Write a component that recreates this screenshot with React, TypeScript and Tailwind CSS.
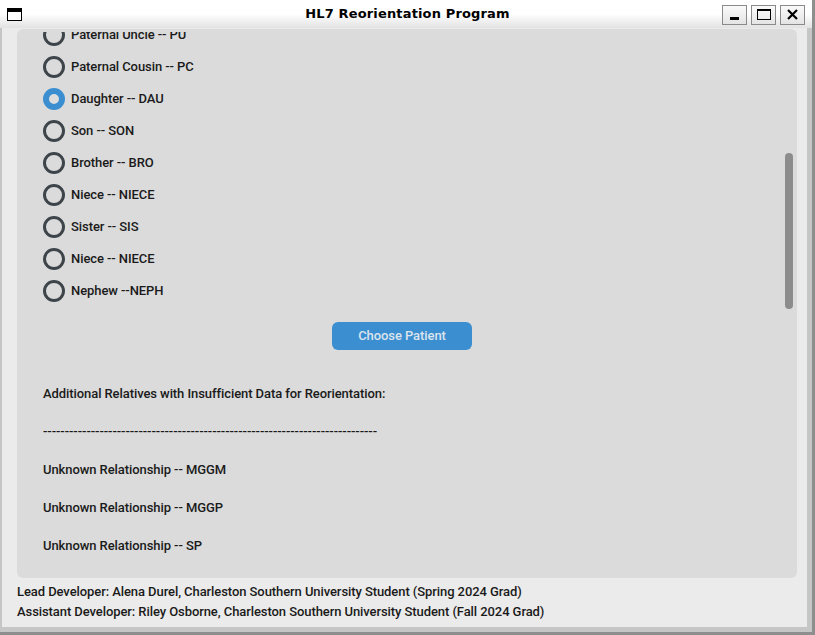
import React from "react";

const relatives = [
  "Paternal Uncle -- PU",
  "Paternal Cousin -- PC",
  "Daughter -- DAU",
  "Son -- SON",
  "Brother -- BRO",
  "Niece -- NIECE",
  "Sister -- SIS",
  "Niece -- NIECE",
  "Nephew --NEPH",
];

const unknowns = [
  "Unknown Relationship -- MGGM",
  "Unknown Relationship -- MGGP",
  "Unknown Relationship -- SP",
];

function Radio({ checked }: { checked: boolean }) {
  return checked ? (
    <div className="w-[22px] h-[22px] rounded-full border-[6px] border-[#3b8ed0] bg-[#dedede] shrink-0" />
  ) : (
    <div className="w-[22px] h-[22px] rounded-full border-[3px] border-[#3e454a] shrink-0" />
  );
}

function TitleButton({ children }: { children: React.ReactNode }) {
  return (
    <div className="w-[25px] h-[20px] border border-[#8a8a8a] bg-gradient-to-b from-[#fafafa] to-[#e4e4e4] flex items-center justify-center">
      {children}
    </div>
  );
}

export default function App() {
  return (
    <div
      className="w-[815px] h-[635px] flex flex-col bg-[#c6c6c6] border-r-[3px] border-b-[3px] border-[#8e8e8e] overflow-hidden"
      style={{ fontFamily: "Roboto, 'Noto Sans', sans-serif" }}
    >
      {/* title bar */}
      <div className="h-[28px] shrink-0 flex items-center justify-between bg-gradient-to-b from-white via-white to-[#e2e2e2] relative">
        <div className="ml-[7px] w-[15px] h-[13px] border border-black border-t-[4px] bg-white" />
        <div
          className="absolute inset-0 flex items-center justify-center pl-[3px] text-[13px] font-bold text-black tracking-[0.15px] pointer-events-none"
          style={{ fontFamily: "'DejaVu Sans', sans-serif" }}
        >
          HL7 Reorientation Program
        </div>
        <div className="flex gap-[4px] mr-[7px] mt-[1px]">
          <TitleButton>
            <div className="w-[9px] h-[3px] bg-black mt-[8px]" />
          </TitleButton>
          <TitleButton>
            <div className="w-[14px] h-[11px] border border-black border-t-[2px]" />
          </TitleButton>
          <TitleButton>
            <svg width="11" height="11" viewBox="0 0 11 11">
              <path d="M1 1 L10 10 M10 1 L1 10" stroke="black" strokeWidth="2.2" />
            </svg>
          </TitleButton>
        </div>
      </div>

      {/* body */}
      <div className="flex-1 flex mr-[5px] mb-[5px]">
        <div className="w-[2px] bg-[#c6c6c6]" />
        <div className="flex-1 bg-[#ebebeb] flex flex-col pl-[15px] pr-[10px] pt-[1px]">
          <div className="relative h-[549px] rounded-[6px] bg-[#dbdbdb]">
            <div className="mt-[3px] h-[543px] overflow-hidden tracking-[-0.08px]">
              <div className="flex flex-col mt-[-13px]">
                {relatives.map((r, i) => (
                  <div key={i} className="h-[32px] flex items-center pl-[26px] gap-[6px]">
                    <Radio checked={i === 2} />
                    <span className="text-[13px] text-[#1a1a1a] font-medium">{r}</span>
                  </div>
                ))}
              </div>
              <div className="flex justify-center mt-[15px] pr-[10px]">
                <button className="w-[140px] h-[28px] rounded-[6px] bg-[#3b8ed0] text-[#dce4ee] text-[13px] font-medium">
                  Choose Patient
                </button>
              </div>
              <div className="flex flex-col mt-[25px] pl-[26px] text-[13px] text-[#1a1a1a] font-medium">
                <div className="h-[38px] flex items-center">
                  Additional Relatives with Insufficient Data for Reorientation:
                </div>
                <div className="h-[38px] flex items-center">{"-".repeat(77)}</div>
                {unknowns.map((u, i) => (
                  <div key={i} className="h-[38px] flex items-center">
                    {u}
                  </div>
                ))}
              </div>
            </div>
            {/* scrollbar thumb */}
            <div className="absolute right-[4px] top-[124px] w-[8px] h-[156px] rounded-full bg-[#8c8c8c]" />
          </div>
          <div className="mt-[4px] text-[13px] leading-[20px] text-[#1a1a1a] font-medium tracking-[-0.08px]">
            <div>Lead Developer: Alena Durel, Charleston Southern University Student (Spring 2024 Grad)</div>
            <div>Assistant Developer: Riley Osborne, Charleston Southern University Student (Fall 2024 Grad)</div>
          </div>
        </div>
      </div>
    </div>
  );
}
